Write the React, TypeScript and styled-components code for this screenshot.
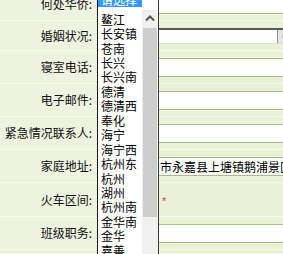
import React from "react";
import styled, { createGlobalStyle } from "styled-components";

const Global = createGlobalStyle`
  html, body { margin: 0; padding: 0; overflow: hidden; background: #ffffff; }
  body { font-family: "Noto Sans CJK SC", "Noto Sans", sans-serif; font-size: 12px; color: #111; }
  #root { width: 283px; height: 254px; }
`;

const Page = styled.div`
  position: relative;
  width: 283px;
  height: 254px;
  overflow: hidden;
`;

const Form = styled.div`
  display: grid;
  grid-template-columns: 97px 400px;
  margin-top: -12px;
`;

const Label = styled.div`
  display: flex;
  align-items: center;
  justify-content: flex-end;
  padding-right: 5px;
  box-sizing: border-box;
  background: #edf3df;
  border-bottom: 1px solid #f8fbf0;
  white-space: nowrap;
  line-height: 14px;
`;

const Cell = styled.div`
  display: flex;
  align-items: center;
  box-sizing: border-box;
  padding: 7px 0 6px 2px;
  background: #e9f2d6;
  border-bottom: 1px solid #f6faeb;
`;

const TextInput = styled.input`
  box-sizing: border-box;
  width: 320px;
  height: 19px;
  margin: 0;
  padding: 0;
  border: 1px solid #a7bb88;
  background: #ffffff;
  font-family: "Noto Sans CJK SC", sans-serif;
  font-size: 12px;
  color: #000;
  outline: none;
`;

const SelectBox = styled.div`
  position: relative;
  box-sizing: border-box;
  width: 195px;
  height: 16px;
  background: #ffffff;
  border-top: 2px solid #5a5a5a;
  border-left: 1px solid #5a5a5a;
  border-bottom: 1px solid #dcdcdc;
`;

const SelectButton = styled.div`
  position: absolute;
  right: 0;
  top: 0;
  width: 16px;
  height: 13px;
  background: #e4e4e4;
  border-left: 1px solid #8c8c8c;
  display: flex;
  align-items: center;
  justify-content: center;
`;

const Required = styled.span`
  margin-left: 63px;
  height: 20px;
  line-height: 20px;
  color: #d43a3a;
  font-family: "Liberation Sans", sans-serif;
  font-size: 11px;
  padding-top: 1px;
  box-sizing: border-box;
`;

const Spacer = styled.div`
  height: 20px;
`;

const ListBox = styled.div`
  position: absolute;
  left: 97px;
  top: -7px;
  width: 62px;
  height: 300px;
  box-sizing: border-box;
  border-left: 1px solid #1a1a1a;
  border-right: 1px solid #3a3a3a;
  background: #ffffff;
  display: flex;
`;

const Options = styled.div`
  width: 44px;
  display: flex;
  flex-direction: column;
`;

const Option = styled.div<{ $active?: boolean }>`
  height: 14.44px;
  line-height: 14.44px;
  padding-left: 3px;
  white-space: nowrap;
  color: ${(p) => (p.$active ? "#ffffff" : "#000000")};
  background: ${(p) => (p.$active ? "#3399ff" : "transparent")};
  margin-bottom: ${(p) => (p.$active ? "5.3px" : "0")};
`;

const Scrollbar = styled.div`
  width: 16px;
  display: flex;
  flex-direction: column;
  background: #f0f0f0;
`;

const ScrollTop = styled.div`
  height: 17px;
  background: #ffffff;
`;

const ScrollButton = styled.div`
  height: 17px;
  background: #f0f0f0;
  display: flex;
  align-items: center;
  justify-content: center;
`;

const Thumb = styled.div`
  height: 189px;
  margin: 1px 1px 0;
  background: #cdcdcd;
`;

type Row =
  | { label: string; kind: "input"; value?: string }
  | { label: string; kind: "select" }
  | { label: string; kind: "required" };

const rows: Row[] = [
  { label: "何处华侨:", kind: "input" },
  { label: "婚姻状况:", kind: "select" },
  { label: "寝室电话:", kind: "input" },
  { label: "电子邮件:", kind: "input" },
  { label: "紧急情况联系人:", kind: "input" },
  { label: "家庭地址:", kind: "input", value: "浙江省温州市永嘉县上塘镇鹅浦景区" },
  { label: "火车区间:", kind: "required" },
  { label: "班级职务:", kind: "input" },
  { label: "", kind: "input" },
];

const options = [
  "请选择", "鳌江", "长安镇", "苍南", "长兴", "长兴南", "德清", "德清西", "奉化",
  "海宁", "海宁西", "杭州东", "杭州", "湖州", "杭州南", "金华南", "金华", "嘉善", "嘉兴",
];

export default function App() {
  return (
    <Page>
      <Global />
      <Form>
        {rows.map((r, i) => (
          <React.Fragment key={i}>
            <Label>{r.label}</Label>
            <Cell>
              {r.kind === "input" && <TextInput readOnly defaultValue={r.value ?? ""} />}
              {r.kind === "select" && (
                <SelectBox>
                  <SelectButton>
                    <svg width="8" height="6" viewBox="0 0 8 6">
                      <path d="M1 1.5 L4 4.5 L7 1.5" fill="none" stroke="#111" strokeWidth="1.6" />
                    </svg>
                  </SelectButton>
                </SelectBox>
              )}
              {r.kind === "required" && (
                <>
                  <Spacer />
                  <Required>*</Required>
                </>
              )}
            </Cell>
          </React.Fragment>
        ))}
      </Form>
      <ListBox>
        <Options>
          {options.map((o, i) => (
            <Option key={o} $active={i === 0}>
              {o}
            </Option>
          ))}
        </Options>
        <Scrollbar>
          <ScrollTop />
          <ScrollButton>
            <svg width="10" height="7" viewBox="0 0 10 7">
              <path d="M1 5.5 L5 1.5 L9 5.5" fill="none" stroke="#505050" strokeWidth="2" />
            </svg>
          </ScrollButton>
          <Thumb />
        </Scrollbar>
      </ListBox>
    </Page>
  );
}
